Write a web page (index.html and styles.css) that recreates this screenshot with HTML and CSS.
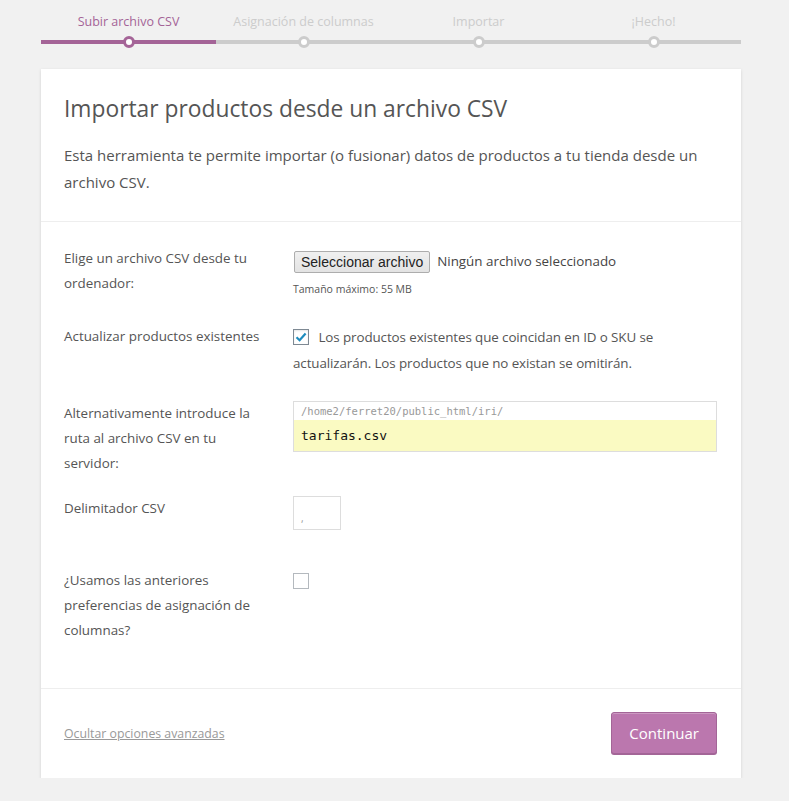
FILE: index.html
```html
<!DOCTYPE html>
<html lang="es">
<head>
  <meta charset="UTF-8" />
  <meta name="viewport" content="width=device-width, initial-scale=1.0"/>
  <title>Importar productos</title>
  <link rel="stylesheet" href="styles.css">
</head>
<body>
  <ol class="steps">
    <li class="step active">Subir archivo CSV</li>
    <li class="step">Asignación de columnas</li>
    <li class="step">Importar</li>
    <li class="step">¡Hecho!</li>
  </ol>

  <div class="card">
    <header class="card-head">
      <h1>Importar productos desde un archivo CSV</h1>
      <p>Esta herramienta te permite importar (o fusionar) datos de productos a tu tienda desde un archivo CSV.</p>
    </header>

    <section class="options">
      <div class="row row-file">
        <label class="field-label">Elige un archivo CSV desde tu ordenador:</label>
        <div class="field">
          <div class="file-picker">
            <button class="file-btn" type="button">Seleccionar archivo</button>
            <span class="file-name">Ningún archivo seleccionado</span>
          </div>
          <small class="hint">Tamaño máximo: 55 MB</small>
        </div>
      </div>

      <div class="row row-update">
        <label class="field-label">Actualizar productos existentes</label>
        <div class="field check-field">
          <span class="checkbox checked">
            <svg width="14" height="14" viewBox="0 0 14 14"><path d="M2.5 7.2 L5.6 10.2 L11.6 3.4" fill="none" stroke="#1e8cbe" stroke-width="2.2"/></svg>
          </span>
          <span class="check-text">Los productos existentes que coincidan en ID o SKU se actualizarán. Los productos que no existan se omitirán.</span>
        </div>
      </div>

      <div class="row row-path">
        <label class="field-label">Alternativamente introduce la ruta al archivo CSV en tu servidor:</label>
        <div class="field">
          <div class="path-box">
            <code class="path-prefix">/home2/ferret20/public_html/iri/</code>
            <div class="path-input">tarifas.csv</div>
          </div>
        </div>
      </div>

      <div class="row row-delim">
        <label class="field-label">Delimitador CSV</label>
        <div class="field">
          <div class="small-input">,</div>
        </div>
      </div>

      <div class="row row-mapping">
        <label class="field-label">¿Usamos las anteriores preferencias de asignación de columnas?</label>
        <div class="field">
          <span class="checkbox"></span>
        </div>
      </div>
    </section>

    <footer class="card-foot">
      <a href="#" class="advanced">Ocultar opciones avanzadas</a>
      <button class="continue" type="button">Continuar</button>
    </footer>
  </div>
</body>
</html>
```

FILE: styles.css
```css
body {
  margin: 0;
  background-color: #f1f1f1;
  font-family: "Open Sans", "Noto Sans", sans-serif;
  color: #555;
}

/* steps bar */
.steps {
  list-style: none;
  display: flex;
  width: 700px;
  margin: 0 0 0 41px;
  padding: 12px 0 0;
}
.step {
  flex: 1;
  position: relative;
  text-align: center;
  font-size: 12.5px;
  line-height: 20px;
  color: #ccc;
  padding-bottom: 8px;
  border-bottom: 4px solid #ccc;
  margin-bottom: 25px;
}
.step::after {
  content: "";
  position: absolute;
  left: 50%;
  bottom: -8px;
  width: 6px;
  height: 6px;
  margin-left: -6px;
  border: 3px solid #ccc;
  border-radius: 50%;
  background: #fff;
}
.step.active {
  color: #a46497;
  border-color: #a46497;
}
.step.active::after {
  border-color: #a46497;
}

/* card */
.card {
  width: 700px;
  margin-left: 41px;
  background: #fff;
  box-shadow: 0 1px 3px rgba(0,0,0,0.13);
}
.card-head {
  padding: 24px 23px 25px;
  border-bottom: 1px solid #eee;
}
.card-head h1 {
  margin: 0;
  font-size: 22.8px;
  font-weight: 400;
  line-height: 31px;
  color: #555;
}
.card-head p {
  margin: 18px 0 0;
  font-size: 15px;
  line-height: 27px;
}

.options {
  padding: 24px 24px 45px 23px;
  border-bottom: 1px solid #eee;
}
.row {
  display: grid;
  grid-template-columns: 206px 1fr;
  column-gap: 23px;
  font-size: 13.4px;
  line-height: 25px;
}
.row-update { margin-top: 27px; }
.row-path { margin-top: 25px; }
.row-delim { margin-top: 20px; }
.row-mapping { margin-top: 38px; }

.field-label {
  color: #555;
}

.file-picker {
  display: flex;
  align-items: center;
  margin-top: 3px;
}
.file-btn {
  font-family: Arial, "Liberation Sans", sans-serif;
  font-size: 14px;
  height: 22px;
  padding: 0 6px;
  margin: 0 1px;
  border: 1px solid #adadad;
  border-radius: 2px;
  background: linear-gradient(#f0f0f0, #e3e3e3);
  color: #222;
}
.file-name {
  margin-left: 6px;
  font-size: 13.4px;
  color: #444;
}
.hint {
  display: block;
  font-size: 10.5px;
  line-height: 16px;
  margin-top: 7px;
  color: #555;
}

.check-field {
  display: block;
}
.checkbox {
  display: inline-flex;
  align-items: center;
  justify-content: center;
  width: 14px;
  height: 14px;
  border: 1px solid #b4b9be;
  background: #fff;
  vertical-align: -2px;
  margin-right: 6px;
}
.row-mapping .checkbox {
  margin-top: 5px;
  vertical-align: top;
}
.check-text {
  line-height: 26px;
  letter-spacing: -0.1px;
}
.checkbox.checked {
  border-color: #7e8993;
  box-shadow: inset 0 1px 2px rgba(0,0,0,0.1);
}

.path-box {
  border: 1px solid #ddd;
  background: #fff;
}
.path-prefix {
  display: block;
  font-family: "DejaVu Sans Mono", monospace;
  font-size: 10.5px;
  line-height: 18px;
  color: #999;
  padding: 0 7px;
  background: #fff;
}
.path-input {
  font-family: "DejaVu Sans Mono", monospace;
  font-size: 13px;
  line-height: 31px;
  padding: 0 7px 0 7px;
  background: #fafac2;
  color: #111;
}

.small-input {
  width: 48px;
  height: 34px;
  border: 1px solid #ddd;
  font-size: 10px;
  line-height: 42px;
  color: #999;
  padding-left: 7px;
  box-sizing: border-box;
}

.card-foot {
  display: flex;
  justify-content: space-between;
  align-items: center;
  padding: 23px 24px 24px 23px;
}
.advanced {
  font-size: 12.3px;
  color: #999;
  text-decoration: underline;
}
.continue {
  font-family: "Open Sans", "Noto Sans", sans-serif;
  font-size: 15px;
  height: 42px;
  padding: 0 17px;
  background: #bb77ae;
  border: 1px solid #a36597;
  border-radius: 3px;
  color: #fff;
  box-shadow: inset 0 1px 0 rgba(255,255,255,0.25), 0 1px 0 #a36597;
}
```
